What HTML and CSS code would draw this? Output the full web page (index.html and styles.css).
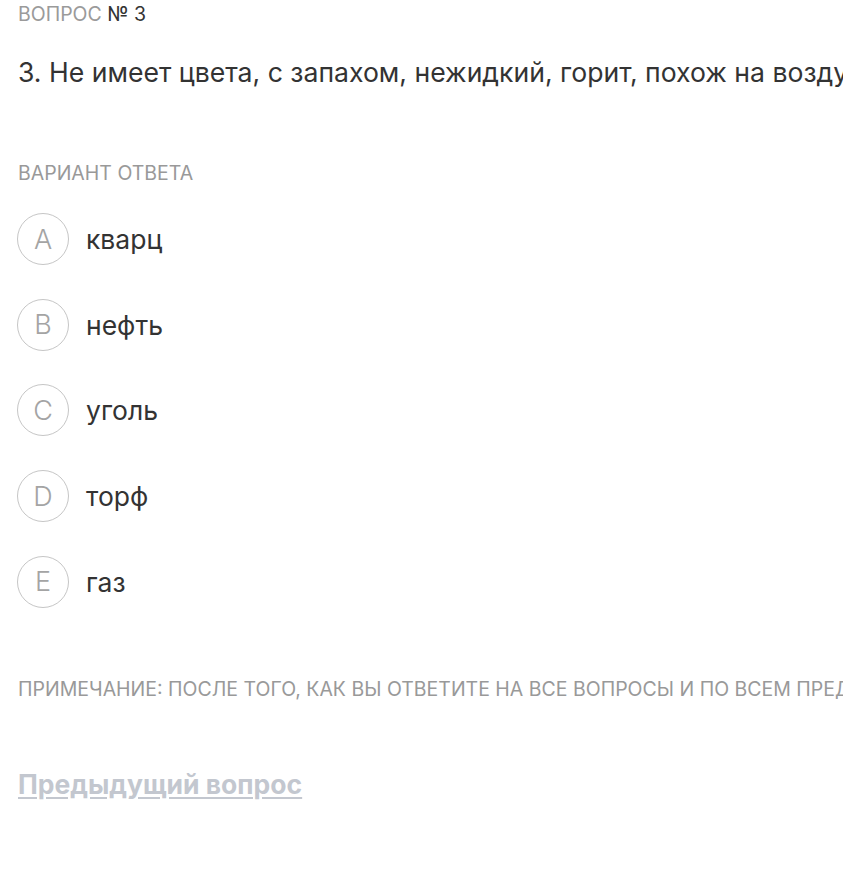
FILE: index.html
```html
<!DOCTYPE html>
<html lang="ru">
<head>
<meta charset="utf-8">
<link rel="stylesheet" href="styles.css">
</head>
<body>
<div class="page">
  <div class="qnum"><span class="muted">ВОПРОС</span> № 3</div>
  <div class="question">3. Не имеет цвета, с запахом, нежидкий, горит, похож на воздух.</div>
  <div class="label">ВАРИАНТ ОТВЕТА</div>
  <ul class="answers">
    <li class="answer"><span class="letter">A</span><span class="text">кварц</span></li>
    <li class="answer"><span class="letter">B</span><span class="text">нефть</span></li>
    <li class="answer"><span class="letter">C</span><span class="text">уголь</span></li>
    <li class="answer"><span class="letter">D</span><span class="text">торф</span></li>
    <li class="answer"><span class="letter">E</span><span class="text">газ</span></li>
  </ul>
  <div class="note">ПРИМЕЧАНИЕ: ПОСЛЕ ТОГО, КАК ВЫ ОТВЕТИТЕ НА ВСЕ ВОПРОСЫ И ПО ВСЕМ ПРЕДМЕТАМ, НАЖМИТЕ КНОПКУ</div>
  <a class="prev" href="#">Предыдущий вопрос</a>
</div>
</body>
</html>
```
FILE: styles.css
```css
html, body {
  margin: 0;
  padding: 0;
  background: #fff;
  overflow: hidden;
}
body {
  font-family: Inter, "Noto Sans", sans-serif;
  color: #333;
  white-space: nowrap;
}
.page {
  padding: 2px 18px 0;
  overflow: hidden;
}
.qnum {
  font-size: 19.5px;
  line-height: 24px;
  color: #333;
}
.muted { color: #9a9a9a; }
.question {
  margin-top: 28px;
  font-size: 26.6px;
  line-height: 36px;
  color: #333;
}
.label {
  margin-top: 71px;
  font-size: 19.5px;
  line-height: 24px;
  color: #999;
}
.answers {
  list-style: none;
  margin: 28px 0 0;
  padding: 0;
  display: flex;
  flex-direction: column;
  gap: 33.7px;
}
.answer {
  display: flex;
  align-items: center;
  gap: 17px;
}
.letter {
  width: 50px;
  height: 50px;
  border: 1.5px solid #c6c6c6;
  border-radius: 50%;
  display: flex;
  align-items: center;
  justify-content: center;
  font-size: 27px;
  font-weight: 300;
  color: #a4a4a4;
  box-sizing: content-box;
  margin-left: -1px;
}
.text {
  font-size: 26.5px;
  color: #333;
}
.note {
  margin-top: 69px;
  font-size: 19.5px;
  line-height: 24px;
  color: #999;
}
.prev {
  display: inline-block;
  margin-top: 67px;
  font-size: 26.5px;
  font-weight: 700;
  color: #c3c7cf;
  text-decoration: underline;
  text-underline-offset: 3px;
}
```
